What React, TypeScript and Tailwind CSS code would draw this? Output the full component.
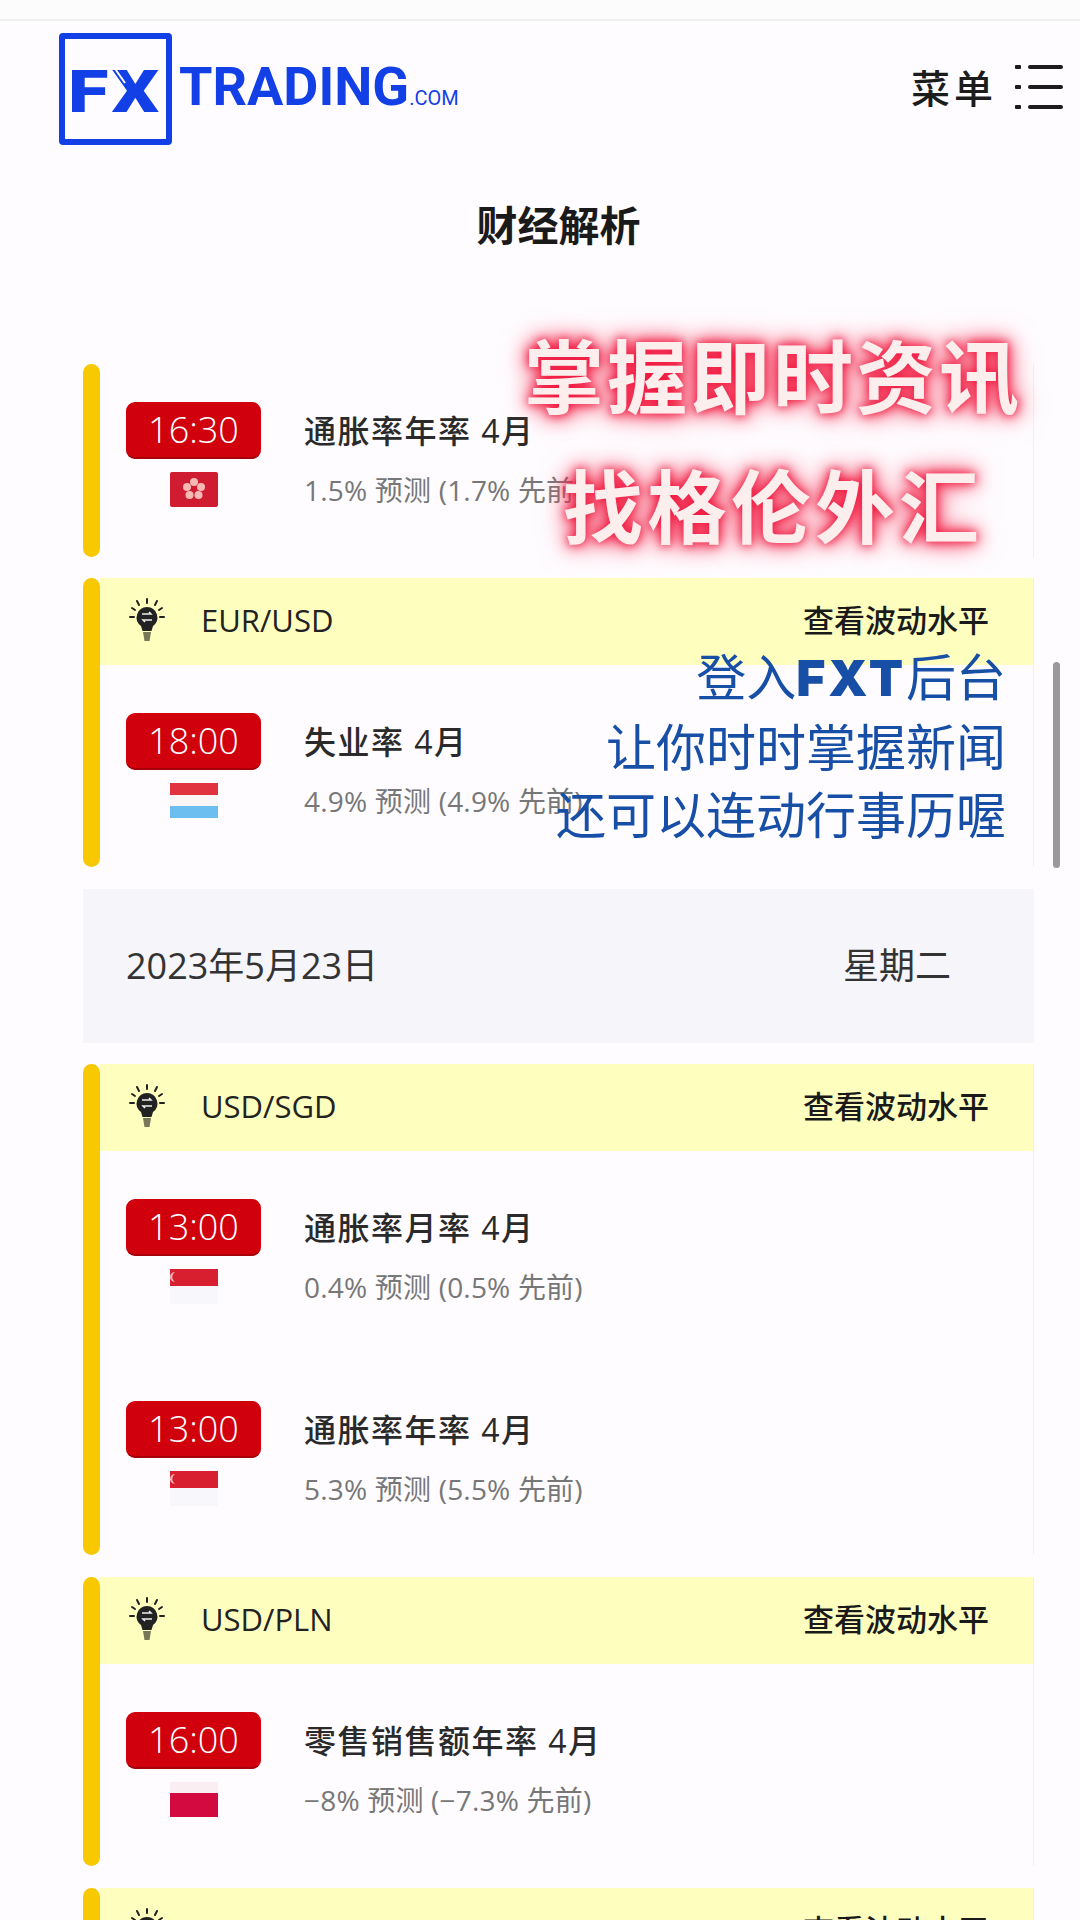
const SANS = "font-['Open_Sans','Noto_Sans_CJK_SC',sans-serif]";

function Bulb() {
  return (
    <svg width="36" height="44" viewBox="0 0 36 44" className="shrink-0">
      <g stroke="#222" strokeWidth="2" strokeLinecap="round">
        <path d="M18 1v4M8 3l2 4M28 3l-2 4M3 10l3 2M33 10l-3 2M1 19h4M31 19h4" />
      </g>
      <path d="M18 9a10.500 10.500 0 0 0-6 19l1.500 5h9l1.500-5a10.500 10.500 0 0 0-6-19z" fill="#222" />
      <path d="M14 34h8l-1.500 9h-5z" fill="#77775a" />
      <path d="M13 16h9l-2-2M23 22h-9l2 2" fill="none" stroke="#eee" strokeWidth="1.500" />
    </svg>
  );
}

function Flag({ kind }: { kind: string }) {
  if (kind === "hk")
    return (
      <svg width="48" height="35" viewBox="0 0 48 35">
        <rect width="48" height="35" rx="2" fill="#d01c30" />
        <g fill="#f6b9b4">
          <circle cx="24" cy="10" r="4" />
          <circle cx="17" cy="15" r="4" />
          <circle cx="31" cy="15" r="4" />
          <circle cx="19.500" cy="23" r="4" />
          <circle cx="28.500" cy="23" r="4" />
        </g>
        <circle cx="24" cy="17" r="2.500" fill="#d01c30" />
      </svg>
    );
  if (kind === "lu")
    return (
      <svg width="48" height="35" viewBox="0 0 48 35">
        <rect width="48" height="12" fill="#e0323f" />
        <rect y="12" width="48" height="11" fill="#fbf6f6" />
        <rect y="23" width="48" height="12" fill="#6cbdf0" />
      </svg>
    );
  if (kind === "sg")
    return (
      <svg width="48" height="35" viewBox="0 0 48 35">
        <rect width="48" height="17" fill="#d71f30" />
        <rect y="17" width="48" height="18" fill="#f8f7fb" />
        <path d="M5 3a5 5 0 0 0 0 10 6 6 0 0 1 0-10z" fill="#f4b6b6" />
      </svg>
    );
  return (
    <svg width="48" height="35" viewBox="0 0 48 35">
      <rect width="48" height="11" fill="#fbeef3" />
      <rect y="11" width="48" height="24" fill="#d20a40" />
    </svg>
  );
}

function Row({ time, flag, title, sub, first }: { time: string; flag: string; title: string; sub: string; first?: boolean }) {
  return (
    <div className={first ? "flex h-[193px] pt-[38px] pl-[26px]" : "flex h-[202px] pt-[48px] pl-[26px]"}>
      <div className="flex w-[135px] flex-col items-center">
        <div className="flex h-[57px] w-[135px] items-center justify-center rounded-[9px] border-b-2 border-[#a80008] bg-[#d1000d] text-[36px] font-light leading-none text-white">
          {time}
        </div>
        <div className="mt-[13px]">
          <Flag kind={flag} />
        </div>
      </div>
      <div className="ml-[43px] flex flex-col">
        <div className="flex h-[57px] items-center text-[32px] font-medium tracking-[1.500px] text-[#2a2a2a]">{title}</div>
        <div className="mt-[9px] text-[28px] leading-[44px] tracking-[0.200px] text-[#777]">{sub}</div>
      </div>
    </div>
  );
}

function PairHeader({ pair }: { pair?: string }) {
  return (
    <div className="flex h-[87px] items-center bg-[#feffbe] pb-[3px] pl-[29px] pr-[44px]">
      <Bulb />
      {pair ? <span className="ml-[36px] text-[31px] text-[#222]">{pair}</span> : null}
      <span className="ml-auto text-[31px] font-medium leading-none text-[#1a1a1a]">查看波动水平</span>
    </div>
  );
}

function Card({ children, h }: { children: React.ReactNode; h: string }) {
  return (
    <div className={`flex ${h} overflow-hidden border-r border-[#f1eff3]`}>
      <div className="w-[17px] shrink-0 rounded-full bg-[#f8c800]" />
      <div className="min-w-0 flex-1">{children}</div>
    </div>
  );
}

export default function App() {
  return (
    <div className={`relative h-[1920px] w-[1080px] overflow-hidden bg-[#fefcff] ${SANS}`}>
      <div className="h-[21px] border-b-2 border-[#efefef] bg-[#fcfcfc]" />

      <header className="flex h-[130px] items-start pl-[59px] pr-[17px] pt-[12px]">
        <div className="relative flex h-[112px] w-[113px] items-center justify-center rounded-[4px] border-[6px] border-[#1240e6] pt-[5px] font-['Roboto',sans-serif] text-[66px] font-black leading-none tracking-[3px] text-[#1240e6]">
          <span className="inline-block scale-x-[1.12] scale-y-[0.9]">FX</span>
          <svg width="101" height="100" viewBox="0 0 101 100" className="absolute left-0 top-0">
            <path d="M46 24L60 44" stroke="#fefcff" strokeWidth="2" />
          </svg>
        </div>
        <div className="ml-[7px] mt-[29px] flex items-baseline font-['Roboto',sans-serif] text-[#1240e6]">
          <span className="text-[54px] font-bold leading-[50px]">TRADING</span>
          <span className="text-[20px] font-normal leading-none">.COM</span>
        </div>
        <div className="ml-auto mt-[29px] flex items-center">
          <span className="text-[39px] font-medium leading-[52px] tracking-[4px] text-[#1c1c1c]">菜单</span>
          <svg width="48" height="46" viewBox="0 0 48 46" className="ml-[18px] -mt-[3px]" fill="#1c1c1c">
            <rect x="0" y="1" width="6" height="4" rx="1" />
            <rect x="13" y="1" width="35" height="4" rx="2" />
            <rect x="0" y="21" width="6" height="4" rx="1" />
            <rect x="13" y="21" width="35" height="4" rx="2" />
            <rect x="0" y="41" width="6" height="4" rx="1" />
            <rect x="13" y="41" width="35" height="4" rx="2" />
          </svg>
        </div>
      </header>

      <div className="ml-[83px] mt-[49px] w-[951px] text-center text-[41px] font-semibold leading-[50px] text-[#1a1a1a]">财经解析</div>

      <main className="ml-[83px] mt-[114px] flex w-[951px] flex-col">
        <Card h="h-[193px]">
          <Row first time="16:30" flag="hk" title="通胀率年率 4月" sub="1.5% 预测 (1.7% 先前)" />
        </Card>
        <div className="mt-[21px]">
          <Card h="h-[289px]">
            <PairHeader pair="EUR/USD" />
            <Row time="18:00" flag="lu" title="失业率 4月" sub="4.9% 预测 (4.9% 先前)" />
          </Card>
        </div>
        <div className="mt-[22px] flex h-[154px] items-center bg-[#f6f5f9] pl-[43px] text-[36px] text-[#333]">
          <span>2023年5月23日</span>
          <span className="ml-[465px]">星期二</span>
        </div>
        <div className="mt-[21px]">
          <Card h="h-[491px]">
            <PairHeader pair="USD/SGD" />
            <Row time="13:00" flag="sg" title="通胀率月率 4月" sub="0.4% 预测 (0.5% 先前)" />
            <Row time="13:00" flag="sg" title="通胀率年率 4月" sub="5.3% 预测 (5.5% 先前)" />
          </Card>
        </div>
        <div className="mt-[22px]">
          <Card h="h-[289px]">
            <PairHeader pair="USD/PLN" />
            <Row time="16:00" flag="pl" title="零售销售额年率 4月" sub="−8% 预测 (−7.3% 先前)" />
          </Card>
        </div>
        <div className="mt-[22px]">
          <Card h="h-[289px]">
            <PairHeader />
          </Card>
        </div>
      </main>

      <div className="absolute left-[1053px] top-[662px] h-[206px] w-[7px] rounded-full bg-[#9a9a9a]" />

      <div className="absolute right-[58px] top-[326px] text-[80px] font-bold leading-[100px] tracking-[3px] text-[#fdeeee] [text-shadow:0_0_10px_#f0143c,0_0_18px_#f0143c,0_0_30px_#f8607a]">
        掌握即时资讯
      </div>
      <div className="absolute left-[563px] top-[456px] text-[80px] font-bold leading-[100px] tracking-[4px] text-[#fdeeee] [text-shadow:0_0_10px_#f0143c,0_0_18px_#f0143c,0_0_30px_#f8607a]">
        找格伦外汇
      </div>
      <div className="absolute right-[74px] top-[643px] text-right text-[50px] leading-[68.500px] text-[#174ea6]">
        <div>
          登入<span className="font-['Inter',sans-serif] font-black tracking-[3px]">FXT</span>后台
        </div>
        <div>让你时时掌握新闻</div>
        <div>还可以连动行事历喔</div>
      </div>
    </div>
  );
}
